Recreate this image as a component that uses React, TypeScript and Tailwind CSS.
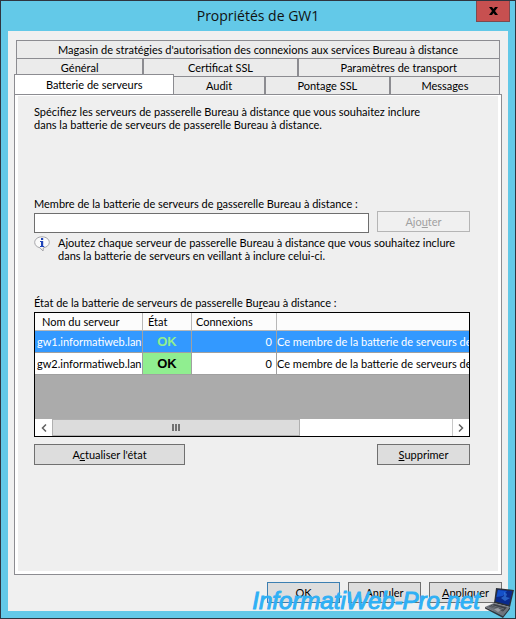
import type { ReactNode } from 'react';

interface Server {
  name: string;
  status: string;
  connections: number;
  message: string;
  selected: boolean;
}

const MESSAGE = 'Ce membre de la batterie de serveurs de';

const SERVERS: Server[] = [
  { name: 'gw1.informatiweb.lan', status: 'OK', connections: 0, message: MESSAGE, selected: true },
  { name: 'gw2.informatiweb.lan', status: 'OK', connections: 0, message: MESSAGE, selected: false },
];

function Tab({ children, className }: { children: ReactNode; className: string }) {
  return (
    <button
      type="button"
      role="tab"
      aria-selected={false}
      className={`h-[18px] border-t border-r-2 border-[#8c8c91] bg-[#ebebeb] text-center leading-[17px] last:border-r ${className}`}
    >
      {children}
    </button>
  );
}

function PushButton({ children, className = '' }: { children: ReactNode; className?: string }) {
  return (
    <button
      type="button"
      className={`h-[21px] border bg-[#dddddd] text-center leading-[19px] ${className}`}
    >
      {children}
    </button>
  );
}

function TitleBar() {
  return (
    <header className="grid h-[30px] grid-cols-[52px_1fr_52px] items-start">
      <h1 className="col-start-2 text-center font-['Open_Sans',sans-serif] text-[14px] leading-[29px] text-[#111]">
        Propriétés de GW1
      </h1>
      <button
        type="button"
        aria-label="Fermer"
        className="mr-[5px] flex h-[21px] w-[34px] items-center justify-center justify-self-end border border-t-0 border-[#7d4a50] bg-[#c75050]"
      >
        <svg width="9" height="8" viewBox="0 0 9 8" aria-hidden="true">
          <path d="M0 0h3l1.500 2L6 0h3L6 4l3 4H6L4.500 6 3 8H0l3-4z" fill="#000" />
        </svg>
      </button>
    </header>
  );
}

function Tabs() {
  return (
    <div role="tablist">
      <div className="mx-[2px] border-l border-[#8c8c91]">
        <div className="flex">
          <Tab className="flex-1">
            Magasin de stratégies d'autorisation des connexions aux services Bureau à distance
          </Tab>
        </div>
        <div className="flex">
          <Tab className="grow-[127] basis-0">Général</Tab>
          <Tab className="grow-[154] basis-0">Certificat SSL</Tab>
          <Tab className="grow-[203] basis-0">Paramètres de transport</Tab>
        </div>
      </div>
      <div className="relative -mt-[2px] mr-[2px] flex items-end">
        <button
          type="button"
          role="tab"
          aria-selected={true}
          className="h-5 grow-[161] basis-0 border border-b-0 border-[#8c8c91] bg-white text-center leading-[19px]"
        >
          Batterie de serveurs
        </button>
        <Tab className="grow-[91] basis-0">Audit</Tab>
        <Tab className="grow-[125] basis-0">Pontage SSL</Tab>
        <Tab className="grow-[110] basis-0">Messages</Tab>
      </div>
    </div>
  );
}

function InfoIcon() {
  return (
    <svg width="16" height="16" viewBox="0 0 16 16" className="shrink-0" aria-hidden="true">
      <path
        d="M8 .8C3.900.8.7 3.200.7 6.400c0 2.600 2 4.700 5.300 5.400L9 15l.3-3.200c3.500-.5 6-2.700 6-5.400C15.300 3.200 12.100.8 8 .8z"
        fill="#fafafa"
        stroke="#a4a4a8"
      />
      <path d="M7 2h2.200v2H7zM6 5h3.200v5h1v1H6v-1h1V6H6z" fill="#2145b8" />
    </svg>
  );
}

function ServerTable() {
  return (
    <div className="border border-black bg-[#ababab]">
      <div className="h-[106px] overflow-hidden">
        <table className="w-full table-fixed border-separate border-spacing-0 whitespace-nowrap">
          <colgroup>
            <col className="w-[108px]" />
            <col className="w-[49px]" />
            <col className="w-[85px]" />
            <col />
          </colgroup>
          <thead>
            <tr className="h-[18px] bg-[#fcfcfc] text-left leading-[17px]">
              <th className="border-r border-b border-[#b8b8b8] p-0 pl-[7px] font-normal">Nom du serveur</th>
              <th className="border-r border-b border-[#b8b8b8] p-0 pl-[5px] font-normal">État</th>
              <th className="border-r border-b border-[#b8b8b8] p-0 pl-1 font-normal">Connexions</th>
              <th className="border-b border-[#b8b8b8] p-0" aria-label="Message" />
            </tr>
          </thead>
          <tbody>
            {SERVERS.map(server => (
              <tr
                key={server.name}
                className={`h-[22px] leading-[21px] ${server.selected ? 'bg-[#3399ff] text-white' : 'bg-white'}`}
              >
                <td className="border-r border-b border-[#a0a0a0] p-0 pl-[2px]">{server.name}</td>
                <td
                  className={`border-r border-b border-[#a0a0a0] p-0 text-center font-['Liberation_Sans',Arial,sans-serif] text-[13px] font-bold ${
                    server.selected ? 'text-[#90ee90]' : 'bg-[#90ee90] text-black'
                  }`}
                >
                  {server.status}
                </td>
                <td className="border-r border-b border-[#a0a0a0] p-0 pr-1 text-right">
                  {server.connections}
                </td>
                <td className="border-b border-[#a0a0a0] p-0">{server.message}</td>
              </tr>
            ))}
          </tbody>
        </table>
      </div>

      {/* Horizontal scroll bar */}
      <div className="flex h-[17px] bg-white">
        <button type="button" aria-label="Gauche" className="flex w-[17px] items-center justify-center">
          <svg width="6" height="8" viewBox="0 0 6 8" aria-hidden="true">
            <path d="M5 .5L1.500 4 5 7.500" fill="none" stroke="#606060" strokeWidth="1.500" />
          </svg>
        </button>
        <div className="flex flex-1">
          <div className="flex w-[62%] items-center justify-center border border-[#b0b0b0] bg-[#dcdcdc]">
            <svg width="8" height="7" viewBox="0 0 8 7" aria-hidden="true">
              <path d="M0 0h2v7H0zM3 0h2v7H3zM6 0h2v7H6z" fill="#707070" />
            </svg>
          </div>
        </div>
        <button
          type="button"
          aria-label="Droite"
          className="flex w-[17px] items-center justify-center border-l border-[#c8c8c8]"
        >
          <svg width="6" height="8" viewBox="0 0 6 8" aria-hidden="true">
            <path d="M1 .5L4.500 4 1 7.500" fill="none" stroke="#606060" strokeWidth="1.500" />
          </svg>
        </button>
      </div>
    </div>
  );
}

function Laptop() {
  return (
    <svg width="31" height="31" viewBox="0 0 31 31" aria-hidden="true">
      <path d="M12 1l18 2-4 17-16-4z" fill="#2c3038" />
      <path d="M13.500 2.500l15 1.500-3.500 14-13.500-3.500z" fill="#0a2a8c" />
      <path d="M14 3l9 1-4 5-6.500 1z" fill="#1450c8" />
      <path d="M20 5l3 2-1 3 4 1-5 3-4-3 3-2z" fill="#3a86ea" opacity=".6" />
      <path d="M10 16l16 4-7 9L1 20z" fill="#70747c" />
      <path d="M10 17l13 3.500-4 4L5 19.500z" fill="#3c4048" />
      <path d="M8 18.500l12 3.500M6.500 19.500l12 3.500" stroke="#8a8e96" strokeWidth=".6" />
      <path d="M10 22l4-1 3 2-3 2z" fill="#9a9ea4" />
      <path d="M1 20l18 9 7-9v2l-7 9L1 21.500z" fill="#33363c" />
    </svg>
  );
}

export default function App() {
  return (
    <div className="relative flex min-h-screen flex-col border border-[#2f3540] bg-[#63c9e8] font-['Lato',Arial,sans-serif] text-[11px] leading-[13px] text-black">
      <TitleBar />

      <main className="mx-[7px] mb-[7px] flex flex-1 flex-col bg-[#f0f0f0] px-[6px] pt-[9px] pb-2">
        <Tabs />

        <section className="flex flex-1 flex-col border border-[#8c8c91] bg-white px-[3px] pt-px pb-[3px]">
          <div className="flex-1 bg-[#efefef] pt-[9px] pr-7 pb-4 pl-4">
            <p>
              Spécifiez les serveurs de passerelle Bureau à distance que vous souhaitez inclure
              <br />
              dans la batterie de serveurs de passerelle Bureau à distance.
            </p>

            <label htmlFor="member" className="mt-[66px] mb-px block">
              Membre de la batterie de serveurs de <u>p</u>asserelle Bureau à distance :
            </label>
            <div className="flex items-end gap-2">
              <input
                id="member"
                type="text"
                className="h-5 min-w-0 flex-1 border border-[#6e6e6e] bg-white px-1 outline-none"
              />
              <button
                type="button"
                disabled
                className="mb-px h-[21px] w-[93px] border border-[#b5b5b5] bg-[#f0f0f0] text-center leading-[19px] text-[#a0a0a0]"
              >
                Ajo<u>u</u>ter
              </button>
            </div>

            <div className="mt-[3px] flex gap-2">
              <InfoIcon />
              <p>
                Ajoutez chaque serveur de passerelle Bureau à distance que vous souhaitez inclure
                <br />
                dans la batterie de serveurs en veillant à inclure celui-ci.
              </p>
            </div>

            <h2 className="mt-[34px] mb-[3px]">
              État de la batterie de serveurs de passerelle Bu<u>r</u>eau à distance :
            </h2>
            <ServerTable />

            <div className="mt-[7px] flex justify-between">
              <PushButton className="w-[151px] border-[#707070]">
                A<u>c</u>tualiser l'état
              </PushButton>
              <PushButton className="w-[93px] border-[#707070]">
                <u>S</u>upprimer
              </PushButton>
            </div>
          </div>
        </section>

        <footer className="mt-[7px] flex justify-end gap-2">
          <PushButton className="w-[73px] border-[#3c7fb1]">OK</PushButton>
          <PushButton className="w-[73px] border-[#707070]">Annuler</PushButton>
          <PushButton className="w-[73px] border-[#707070]">
            <u>A</u>ppliquer
          </PushButton>
        </footer>
      </main>

      <div className="pointer-events-none absolute right-0 bottom-0 flex items-start gap-1">
        <span className="font-['Liberation_Sans',Arial,sans-serif] text-[24px] leading-[28px] text-[#2fb0f5] italic [-webkit-text-stroke:1px_#2fb0f5]">
          InformatiWeb-Pro.net
        </span>
        <Laptop />
      </div>
    </div>
  );
}
